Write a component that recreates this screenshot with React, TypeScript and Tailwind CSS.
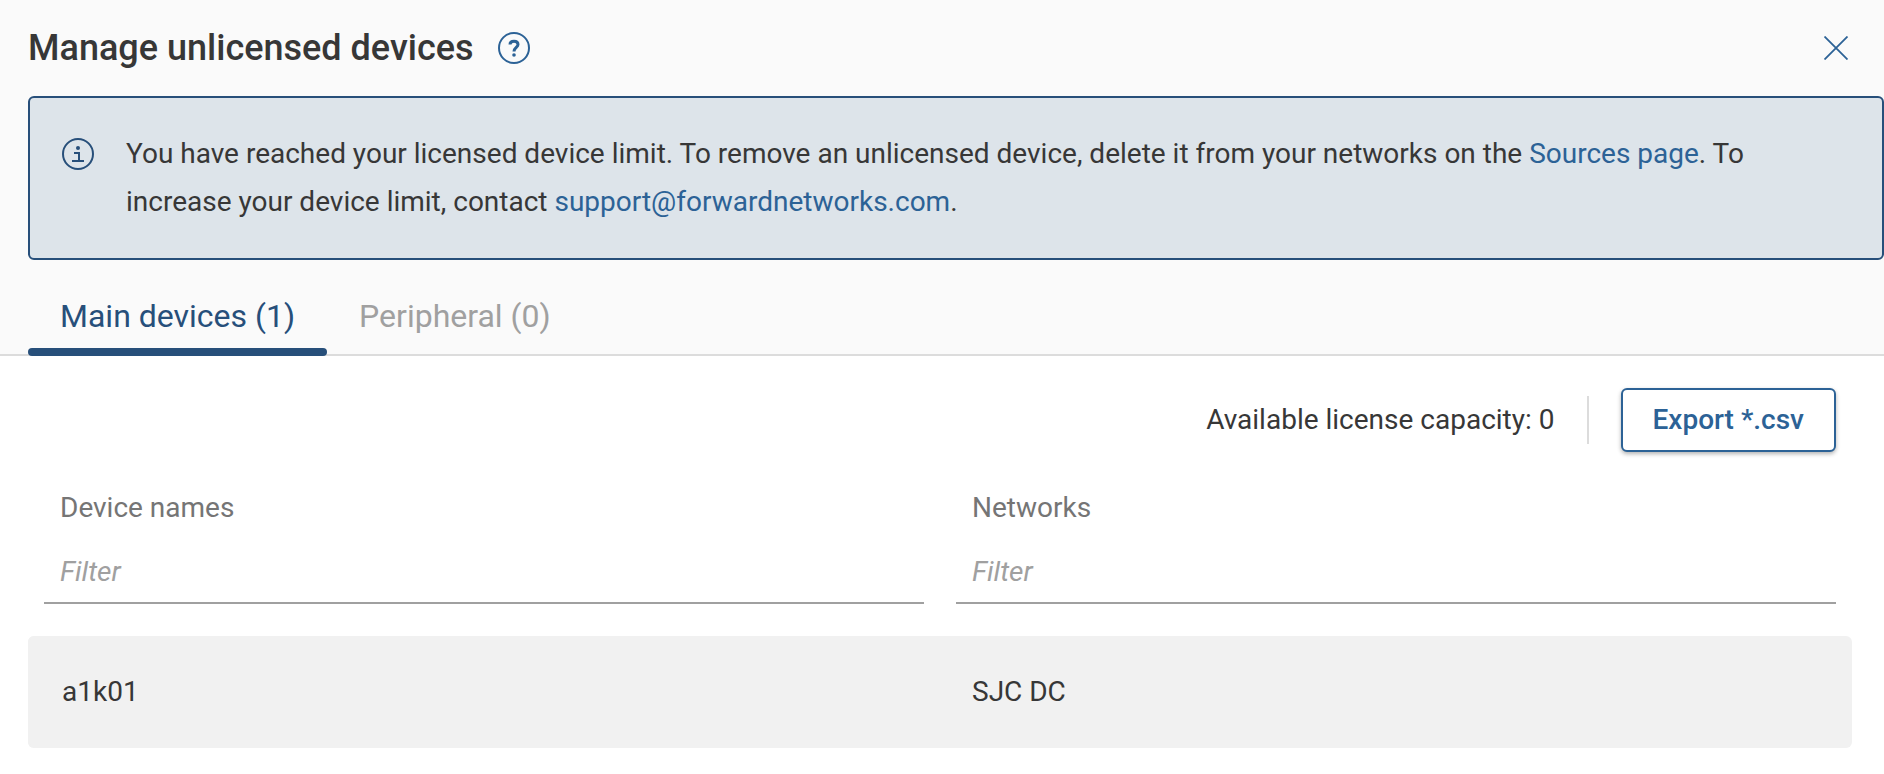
import { useState } from "react";

const devices = [{ name: "a1k01", network: "SJC DC" }];

const tabs = [
  { id: "main", label: "Main devices", count: 1 },
  { id: "peripheral", label: "Peripheral", count: 0 },
];

const columns = [
  { id: "name", label: "Device names" },
  { id: "network", label: "Networks" },
];

function HelpIcon() {
  return (
    <svg className="size-8" viewBox="0 0 32 32" fill="none" stroke="currentColor" aria-hidden="true">
      <circle cx="16" cy="16" r="15" strokeWidth="2" />
      <path d="M12 12.6C12 10.500 13.600 9.200 16 9.200S20 10.500 20 12.600C20 15.300 16 15.700 16 19.500" strokeWidth="3" />
      <circle cx="16" cy="23" r="1.800" fill="currentColor" stroke="none" />
    </svg>
  );
}

function InfoIcon() {
  return (
    <svg className="size-8 shrink-0" viewBox="0 0 32 32" fill="none" stroke="currentColor" strokeWidth="2" aria-hidden="true">
      <circle cx="16" cy="16" r="15" />
      <circle cx="16" cy="10" r="2" fill="currentColor" stroke="none" />
      <path d="M12 15h5v8M10 23h12" />
    </svg>
  );
}

function CloseIcon() {
  return (
    <svg className="size-6" viewBox="0 0 24 24" stroke="currentColor" strokeWidth="1.800" aria-hidden="true">
      <path d="M0.500 0.500l23 23M23.500 0.500l-23 23" />
    </svg>
  );
}

export default function App() {
  const [activeTab, setActiveTab] = useState("main");
  const [filters, setFilters] = useState<Record<string, string>>({ name: "", network: "" });

  const rows = activeTab === "main" ? devices : [];
  const visible = rows.filter(
    (d) => d.name.includes(filters.name) && d.network.includes(filters.network)
  );

  return (
    <div className="min-h-screen bg-white font-[Roboto,sans-serif] text-[28px] leading-10 text-[#373737]">
      <header className="border-b-2 border-[#dcdcdc] bg-[#fafafa] pl-7">
        <div className="flex h-24 items-center gap-6 pr-6">
          <h1 className="text-4xl font-medium">Manage unlicensed devices</h1>
          <button type="button" aria-label="Help" className="text-[#2c6296]">
            <HelpIcon />
          </button>
          <button type="button" aria-label="Close" className="ml-auto flex size-12 items-center justify-center text-[#2c6296]">
            <CloseIcon />
          </button>
        </div>

        {/* License limit notice */}
        <div className="flex gap-8 rounded-md border-2 border-[#274f7a] bg-[#dde4ea] p-8">
          <div className="pt-2 text-[#274f7a]">
            <InfoIcon />
          </div>
          <p className="leading-12">
            You have reached your licensed device limit. To remove an unlicensed device, delete it from your networks on the{" "}
            <a href="#sources" className="text-[#2c6296]">Sources page</a>. To increase your device limit, contact{" "}
            <a href="mailto:support@forwardnetworks.com" className="text-[#2c6296]">support@forwardnetworks.com</a>.
          </p>
        </div>

        <div role="tablist" className="-mb-0.5 flex text-[32px]">
          {tabs.map((tab) => (
            <button
              key={tab.id}
              type="button"
              role="tab"
              aria-selected={activeTab === tab.id}
              onClick={() => setActiveTab(tab.id)}
              className={activeTab === tab.id ? "text-[#274f7a]" : "text-[#a0a0a0]"}
            >
              <span className="block px-8 pt-9 pb-3">
                {tab.label} ({tab.count})
              </span>
              <span className={`block h-2 rounded-sm ${activeTab === tab.id ? "bg-[#274f7a]" : ""}`} />
            </button>
          ))}
        </div>
      </header>

      <main className="px-7 pt-8 pb-6">
        <div className="mr-1 flex items-center justify-end gap-8 pr-4">
          <span>Available license capacity: 0</span>
          <span className="h-12 w-0.5 bg-[#dcdcdc]" />
          <button
            type="button"
            className="h-16 rounded-md border-2 border-[#2c6296] bg-white px-[30px] font-medium text-[#2c6296] shadow-[0_2px_4px_rgba(0,0,0,0.3)]"
          >
            Export *.csv
          </button>
        </div>

        <div className="mr-1 pt-9">
          <table className="w-full table-fixed border-separate border-spacing-0 text-left">
            <thead>
              <tr>
                {columns.map((col) => (
                  <th key={col.id} scope="col" className="px-4 pb-8 font-normal">
                    <label htmlFor={`filter-${col.id}`} className="mb-3 block pl-4 text-[#757575]">
                      {col.label}
                    </label>
                    <input
                      id={`filter-${col.id}`}
                      type="text"
                      placeholder="Filter"
                      value={filters[col.id]}
                      onChange={(e) => setFilters({ ...filters, [col.id]: e.target.value })}
                      className="block h-16 w-full border-b-2 border-[#a0a0a0] px-4 outline-none placeholder:text-[#a0a0a0] placeholder:italic"
                    />
                  </th>
                ))}
              </tr>
            </thead>
            <tbody>
              {visible.map((device) => (
                <tr key={device.name} className="bg-[#f1f1f1]">
                  <td className="h-28 rounded-l-md border-l-2 border-[#f1f1f1] px-8">{device.name}</td>
                  <td className="h-28 rounded-r-md px-8">{device.network}</td>
                </tr>
              ))}
            </tbody>
          </table>
        </div>
      </main>
    </div>
  );
}
